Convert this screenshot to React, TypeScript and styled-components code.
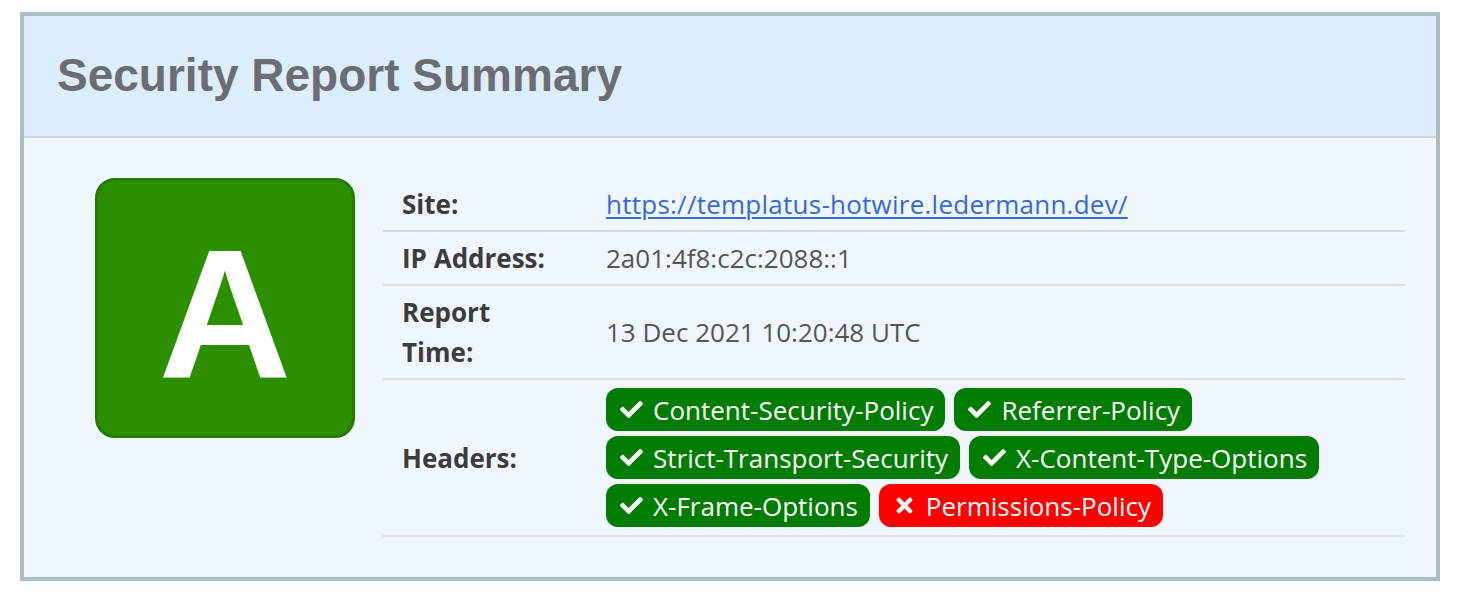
import React from "react";
import styled, { createGlobalStyle } from "styled-components";
import { FaCheck, FaTimes } from "react-icons/fa";

const GlobalStyle = createGlobalStyle`
  html, body {
    margin: 0;
    padding: 0;
    background: #ffffff;
  }
  body {
    padding: 12px 24px 12px 20px;
  }
`;

type HeaderItem = { name: string; ok: boolean };

const headers: HeaderItem[] = [
  { name: "Content-Security-Policy", ok: true },
  { name: "Referrer-Policy", ok: true },
  { name: "Strict-Transport-Security", ok: true },
  { name: "X-Content-Type-Options", ok: true },
  { name: "X-Frame-Options", ok: true },
  { name: "Permissions-Policy", ok: false },
];

const Panel = styled.section`
  width: 1420px;
  box-sizing: border-box;
  border: 4px solid #a9bfc3;
  background: #eff6fe;
`;

const PanelHeader = styled.header`
  height: 120px;
  display: flex;
  align-items: center;
  padding: 0 0 0 33px;
  background: #dcedfc;
  border-bottom: 2px solid #c8d6dc;
`;

const Title = styled.h1`
  margin: 0;
  font-family: "Liberation Sans", Arial, sans-serif;
  font-weight: 700;
  font-size: 46px;
  color: #6c6d72;
  padding-bottom: 2px;
`;

const PanelBody = styled.div`
  display: flex;
  align-items: flex-start;
  gap: 28px;
  padding: 40px 31px 40px 71px;
`;

const Grade = styled.div`
  flex: 0 0 auto;
  width: 260px;
  height: 260px;
  box-sizing: border-box;
  padding-top: 10px;
  border: 3px solid #267a00;
  border-radius: 20px;
  background: #2b8f00;
  display: flex;
  align-items: center;
  justify-content: center;
  font-family: "Liberation Sans", Arial, sans-serif;
  font-weight: 700;
  font-size: 184px;
  line-height: 1;
  color: #ffffff;
`;

const Table = styled.div`
  flex: 1;
  display: grid;
  grid-template-columns: 223px 1fr;
  font-family: "Open Sans", "Noto Sans", sans-serif;
  font-size: 26px;
  line-height: 40px;
`;

const Label = styled.div`
  display: flex;
  align-items: center;
  padding: 6px 19px;
  font-weight: 700;
  color: #3c3c3c;
  border-bottom: 2px solid #dddddd;
`;

const Value = styled.div`
  display: flex;
  align-items: center;
  padding: 6px 0;
  color: #555555;
  border-bottom: 2px solid #dddddd;
`;

const Link = styled.a`
  color: #3569d8;
  letter-spacing: 0.25px;
  text-decoration: underline;
  text-underline-offset: 3px;
  text-decoration-thickness: 2px;
`;

const Badges = styled.div`
  display: flex;
  flex-wrap: wrap;
  row-gap: 5px;
  column-gap: 9px;
  padding: 2px 80px 2px 0;
`;

const Badge = styled.span<{ $ok: boolean }>`
  display: inline-flex;
  align-items: center;
  gap: 10px;
  height: 43px;
  padding: 0 12px 0 14px;
  border-radius: 12px;
  background: ${({ $ok }) => ($ok ? "#007c00" : "#ff0000")};
  color: #ffffff;
  line-height: 1;

  svg {
    height: 23px;
    width: auto;
  }
`;

export default function App() {
  return (
    <>
      <GlobalStyle />
      <Panel>
        <PanelHeader>
          <Title>Security Report Summary</Title>
        </PanelHeader>
        <PanelBody>
          <Grade>A</Grade>
          <Table>
            <Label>Site:</Label>
            <Value>
              <Link href="#">https://templatus-hotwire.ledermann.dev/</Link>
            </Value>
            <Label>IP Address:</Label>
            <Value>2a01:4f8:c2c:2088::1</Value>
            <Label>
              Report
              <br />
              Time:
            </Label>
            <Value>13 Dec 2021 10:20:48 UTC</Value>
            <Label>Headers:</Label>
            <Value>
              <Badges>
                {headers.map((h) => (
                  <Badge key={h.name} $ok={h.ok}>
                    {h.ok ? <FaCheck /> : <FaTimes />}
                    {h.name}
                  </Badge>
                ))}
              </Badges>
            </Value>
          </Table>
        </PanelBody>
      </Panel>
    </>
  );
}
